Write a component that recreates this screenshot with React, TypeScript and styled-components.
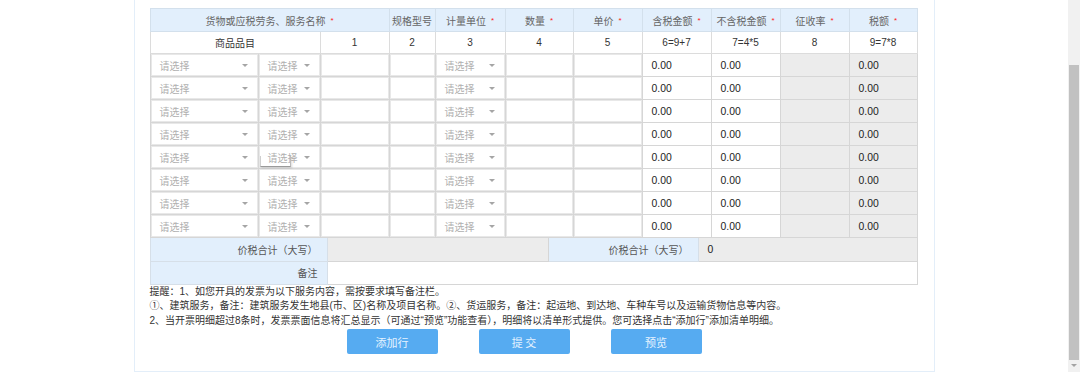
import React from "react"
import styled, { createGlobalStyle } from "styled-components"

const GlobalStyle = createGlobalStyle`
  html, body {
    margin: 0;
    padding: 0;
    background: #fff;
    overflow: hidden;
  }
  body {
    font-family: "Liberation Sans", "Noto Sans CJK SC", sans-serif;
    font-size: 10px;
    color: #333;
  }
`

interface Column {
  title: string
  required?: boolean
  span?: number
}

const headColumns: Column[] = [
  { title: "货物或应税劳务、服务名称", required: true, span: 3 },
  { title: "规格型号" },
  { title: "计量单位", required: true },
  { title: "数量", required: true },
  { title: "单价", required: true },
  { title: "含税金额", required: true },
  { title: "不含税金额", required: true },
  { title: "征收率", required: true },
  { title: "税额", required: true },
]

const formulaRow = ["1", "2", "3", "4", "5", "6=9+7", "7=4*5", "8", "9=7*8"]

const colWidths = [108, 62, 69, 46, 70, 68, 69, 69, 69, 69, 68]

const rows = Array.from({ length: 8 }, (_, i) => i)

export default function App() {
  return (
    <>
      <GlobalStyle />
      <Page>
        <Main>
          <Panel>
            <Grid>
              <colgroup>
                {colWidths.map((w, i) => (
                  <col key={i} style={{ width: w }} />
                ))}
              </colgroup>
              <thead>
                <HeadRow>
                  {headColumns.map((c) => (
                    <HeadCell key={c.title} colSpan={c.span}>
                      {c.title}
                      {c.required && <Req>*</Req>}
                    </HeadCell>
                  ))}
                </HeadRow>
              </thead>
              <tbody>
                <FormulaRow>
                  <FormulaCell colSpan={2}>商品品目</FormulaCell>
                  {formulaRow.map((f) => (
                    <FormulaCell key={f}>{f}</FormulaCell>
                  ))}
                </FormulaRow>
                {rows.map((r) => (
                  <DataRow key={r}>
                    <FieldCell>
                      <Select />
                    </FieldCell>
                    <FieldCell>
                      <Select ghost={r === 4} />
                    </FieldCell>
                    <FieldCell>
                      <Input />
                    </FieldCell>
                    <FieldCell>
                      <Input />
                    </FieldCell>
                    <FieldCell>
                      <Select />
                    </FieldCell>
                    <FieldCell>
                      <Input />
                    </FieldCell>
                    <FieldCell>
                      <Input />
                    </FieldCell>
                    <AmountCell>0.00</AmountCell>
                    <AmountCell>0.00</AmountCell>
                    <AmountCell muted />
                    <AmountCell muted>0.00</AmountCell>
                  </DataRow>
                ))}
              </tbody>
            </Grid>

            <Summary>
              <colgroup>
                <col style={{ width: 177 }} />
                <col style={{ width: 221 }} />
                <col style={{ width: 150 }} />
                <col style={{ width: 219 }} />
              </colgroup>
              <tbody>
                <SummaryRow>
                  <LabelCell>价税合计（大写）</LabelCell>
                  <ValueCell muted />
                  <LabelCell>价税合计（大写）</LabelCell>
                  <ValueCell muted>0</ValueCell>
                </SummaryRow>
                <SummaryRow>
                  <LabelCell>备注</LabelCell>
                  <ValueCell colSpan={3} />
                </SummaryRow>
              </tbody>
            </Summary>

            <Hints>
              <p>提醒：1、如您开具的发票为以下服务内容，需按要求填写备注栏。</p>
              <p>
                ①、建筑服务，备注：建筑服务发生地县(市、区)名称及项目名称。②、货运服务，备注：起运地、到达地、车种车号以及运输货物信息等内容。
              </p>
              <p>
                2、当开票明细超过8条时，发票票面信息将汇总显示（可通过“预览”功能查看），明细将以清单形式提供。您可选择点击“添加行”添加清单明细。
              </p>
            </Hints>

            <Actions>
              <ActionButton>添加行</ActionButton>
              <ActionButton>提 交</ActionButton>
              <ActionButton>预览</ActionButton>
            </Actions>
          </Panel>
        </Main>
        <ScrollTrack>
          <Thumb />
          <DownArrow />
        </ScrollTrack>
      </Page>
    </>
  )
}

const Select: React.FC<{ ghost?: boolean }> = ({ ghost }) => (
  <SelectBox>
    <Placeholder>请选择</Placeholder>
    <Caret />
    {ghost && <Ghost />}
  </SelectBox>
)

const Page = styled.div`
  display: flex;
  width: 1080px;
  height: 372px;
`

const Main = styled.div`
  flex: 1;
  display: flex;
  justify-content: center;
`

const Panel = styled.div`
  box-sizing: border-box;
  width: 801px;
  height: 372px;
  padding: 8px 17px 0 15px;
  border: 1px solid #e3eef9;
  border-top: none;
  background: #fff;
`

const Grid = styled.table`
  width: 767px;
  table-layout: fixed;
  border-collapse: collapse;
`

const HeadRow = styled.tr`
  height: 23px;
`

const HeadCell = styled.th`
  padding: 0;
  background: #e2effc;
  border: 1px solid #d3e0ec;
  color: #666;
  font-weight: normal;
  font-size: 10px;
  white-space: nowrap;
  overflow: hidden;
`

const Req = styled.span`
  color: #f22;
  margin-left: 5px;
  font-size: 8px;
  position: relative;
  top: -2px;
`

const FormulaRow = styled.tr`
  height: 22px;
`

const FormulaCell = styled.td`
  padding: 0;
  text-align: center;
  border: 1px solid #dcdcdc;
  color: #333;
  font-size: 10px;
`

const DataRow = styled.tr`
  height: 23px;
`

const FieldCell = styled.td`
  padding: 0;
  border: 1px solid #d6d6d6;
  height: 22px;
`

const SelectBox = styled.div`
  position: relative;
  box-sizing: border-box;
  height: 22px;
  display: flex;
  align-items: center;
  justify-content: space-between;
  padding: 0 10px 0 9px;
  box-shadow: inset 0 0 0 1px #e8e8e8;
  background: #fff;
`

const Placeholder = styled.span`
  color: #b0b0b0;
  font-size: 10px;
`

const Caret = styled.span`
  width: 0;
  height: 0;
  border-left: 3px solid transparent;
  border-right: 3px solid transparent;
  border-top: 3px solid #a5a5a5;
`

const Ghost = styled.span`
  position: absolute;
  left: 1px;
  top: 10px;
  width: 29px;
  height: 10px;
  border-left: 1px solid #cfcfcf;
  border-bottom: 1px solid #9a9a9a;
  border-right: 1px solid #bcbcbc;
  box-shadow: 1px 1px 2px rgba(0, 0, 0, 0.15);
`

const Input = styled.div`
  box-sizing: border-box;
  height: 22px;
  box-shadow: inset 0 0 0 1px #e8e8e8;
  background: #fff;
`

const AmountCell = styled.td<{ muted?: boolean }>`
  padding: 0 0 0 9px;
  border: 1px solid #d6d6d6;
  background: ${(p) => (p.muted ? "#ececec" : "#fff")};
  color: #222;
  font-size: 10.4px;
`

const Summary = styled.table`
  width: 767px;
  table-layout: fixed;
  border-collapse: collapse;
`

const SummaryRow = styled.tr`
  height: 23px;
  &:first-child td {
    border-top: none;
  }
`

const LabelCell = styled.td`
  padding: 0 9px 0 0;
  text-align: right;
  background: #e2effc;
  border: 1px solid #d6dfe8;
  color: #555;
  font-size: 10px;
`

const ValueCell = styled.td<{ muted?: boolean }>`
  padding: 0 0 0 9px;
  border: 1px solid #d6d6d6;
  background: ${(p) => (p.muted ? "#ececec" : "#fff")};
  color: #222;
  font-size: 10.4px;
`

const Hints = styled.div`
  color: #333;
  font-size: 10px;
  line-height: 14.5px;

  p {
    margin: 0;
    white-space: nowrap;
  }
`

const Actions = styled.div`
  display: flex;
  gap: 41px;
  margin-top: 1px;
  padding-left: 197px;
`

const ActionButton = styled.button`
  width: 91px;
  height: 25px;
  border: none;
  border-radius: 2px;
  background: #56abf1;
  color: #e6f3ff;
  font-family: "Noto Sans CJK SC", sans-serif;
  font-size: 11px;
  padding: 0;
`

const ScrollTrack = styled.div`
  box-sizing: border-box;
  width: 12px;
  height: 372px;
  background: #f1f1f1;
  display: flex;
  flex-direction: column;
  align-items: center;
  padding-top: 65px;
`

const Thumb = styled.div`
  width: 10px;
  height: 295px;
  background: #c1c1c1;
`

const DownArrow = styled.span`
  margin-top: 4px;
  width: 0;
  height: 0;
  border-left: 3px solid transparent;
  border-right: 3px solid transparent;
  border-top: 3px solid #a3a3a3;
`
